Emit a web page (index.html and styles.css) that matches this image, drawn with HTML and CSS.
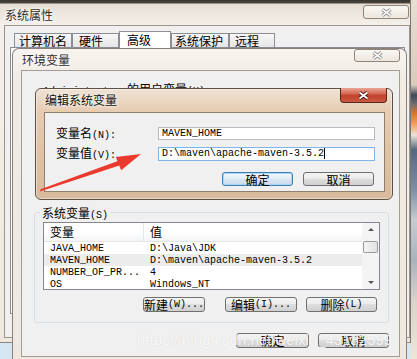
FILE: index.html
```html
<!DOCTYPE html>
<html>
<head>
<meta charset="utf-8">
<link rel="stylesheet" href="styles.css">
</head>
<body>
<div class="desk ui">
  <div class="outer">
    <div class="outer-tbar"><span class="ttl">系统属性</span></div>
    <div class="capx capx-in outer-x">
      <svg width="13" height="9" viewBox="0 0 13 9"><path d="M2.5 1.5 L10.5 7.5 M10.5 1.5 L2.5 7.5" stroke="#7a7a7a" stroke-width="3.4" fill="none"/><path d="M2.5 1.5 L10.5 7.5 M10.5 1.5 L2.5 7.5" stroke="#fbfbfb" stroke-width="1.6" fill="none"/></svg>
    </div>
    <div class="outer-client">
      <div class="tabs">
        <div class="tab t1">计算机名</div>
        <div class="tab t2">硬件</div>
        <div class="tab t3 sel">高级</div>
        <div class="tab t4">系统保护</div>
        <div class="tab t5">远程</div>
      </div>
      <div class="tabpanel"></div>
    </div>
  </div>

  <div class="env">
    <div class="env-tbar"><span class="ttl">环境变量</span></div>
    <div class="capx capx-in env-x">
      <svg width="13" height="9" viewBox="0 0 13 9"><path d="M2.5 1.5 L10.5 7.5 M10.5 1.5 L2.5 7.5" stroke="#7a7a7a" stroke-width="3.4" fill="none"/><path d="M2.5 1.5 L10.5 7.5 M10.5 1.5 L2.5 7.5" stroke="#fbfbfb" stroke-width="1.6" fill="none"/></svg>
    </div>
    <div class="env-client">
      <div class="user-sec"><span class="m">Administrator </span>的用户变量<span class="m">(U)</span></div>
      <div class="sys-group">
        <div class="glabel">系统变量<span class="m">(S)</span></div>
        <div class="lv">
          <div class="lv-main">
            <div class="lv-head">
              <div class="h1">变量</div>
              <div class="h2">值</div>
            </div>
            <div class="lv-row m"><div class="c1">JAVA_HOME</div><div class="c2">D:\Java\JDK</div></div>
            <div class="lv-row m sel-row"><div class="c1">MAVEN_HOME</div><div class="c2">D:\maven\apache-maven-3.5.2</div></div>
            <div class="lv-row m"><div class="c1">NUMBER_OF_PR...</div><div class="c2">4</div></div>
            <div class="lv-row m"><div class="c1">OS</div><div class="c2">Windows_NT</div></div>
          </div>
          <div class="sb">
            <div class="arr-up"></div>
            <div class="thumb"></div>
            <div class="arr-down"></div>
          </div>
        </div>
        <div class="gbtns">
          <div class="btn b-new">新建<span class="m">(W)...</span></div>
          <div class="btn b-edit">编辑<span class="m">(I)...</span></div>
          <div class="btn b-del">删除<span class="m">(L)</span></div>
        </div>
      </div>
      <div class="bbtns">
        <div class="btn b-ok">确定</div>
        <div class="btn b-cancel">取消</div>
      </div>
    </div>
  </div>

  <div class="edit">
    <div class="edit-tbar"><span class="ttl dark">编辑系统变量</span></div>
    <div class="capx edit-x">
      <svg width="13" height="9" viewBox="0 0 13 9"><path d="M2.5 1.5 L10.5 7.5 M10.5 1.5 L2.5 7.5" stroke="#4a1c14" stroke-width="3.6" fill="none"/><path d="M2.5 1.5 L10.5 7.5 M10.5 1.5 L2.5 7.5" stroke="#ffffff" stroke-width="1.8" fill="none"/></svg>
    </div>
    <div class="edit-client">
      <div class="erow">
        <div class="elabel">变量名<span class="m">(N):</span></div>
        <div class="einput m">MAVEN_HOME</div>
      </div>
      <div class="erow erow2">
        <div class="elabel">变量值<span class="m">(V):</span></div>
        <div class="einput focus m">D:\maven\apache-maven-3.5.2<span class="caret"></span></div>
      </div>
      <div class="ebtns">
        <div class="btn def b-eok">确定</div>
        <div class="btn b-ecancel">取消</div>
      </div>
    </div>
  </div>

  <svg class="arrow" width="417" height="359" viewBox="0 0 417 359">
    <polygon points="40,191.5 40.6,189.3 120,160.2 121.6,164.8" fill="#ea3a2e"/>
    <polygon points="141,154 115.8,157 121.2,170.2" fill="#ea3a2e"/>
  </svg>

  <div class="wm">https://blog.csdn.net/weixin_43182599</div>
</div>
</body>
</html>
```

FILE: styles.css
```css
* { box-sizing: border-box; margin: 0; padding: 0; }
html, body { width: 417px; height: 359px; overflow: hidden; }
body { background: #d7e6f4; }

.ui {
  font-family: "Noto Sans CJK SC", "Liberation Sans", sans-serif;
  font-size: 12px;
  line-height: 14px;
  color: #000;
}
.m { font-family: "Liberation Mono", monospace; font-size: 10px; }

.desk {
  position: relative;
  width: 417px;
  height: 359px;
  overflow: hidden;
  background:
    linear-gradient(to bottom, #e8ded2 0, #d8cbbc 85px, #3f4a58 95px, #6b6e73 104px, #d9742a 113px, #f0a050 124px, #e9e2d8 135px, #55687d 150px, #7d8fa3 190px, #c6ccd2 220px, #aab3bc 260px, #d8d2ca 300px, #efe6da 359px) right top / 7px 100% no-repeat,
    #d7e6f4;
}

/* ---------- outer window ---------- */
.outer {
  position: absolute;
  left: 0;
  top: 0;
  width: 411px;
  height: 343px;
  background: linear-gradient(#3b3530 0, #4a443e 3px, #e6ded4 4px, #f4efe9 24px, #efe8df 100%);
  border-right: 1px solid #7d766e;
  border-bottom: 1px solid #8d867e;
}
.outer-tbar { height: 25px; padding: 8px 0 0 5px; }
.ttl { color: #2e2e2e; text-shadow: 0 0 5px #fff, 0 0 3px #fff; }
.ttl.dark { color: #111; }

.capx {
  position: absolute;
  display: flex;
  align-items: center;
  justify-content: center;
}
.capx-in {
  border: 1px solid #8f857a;
  border-radius: 3px;
  background: linear-gradient(#faf7f3, #ede6de);
}
.outer-x { left: 363px; top: 5px; width: 46px; height: 14px; }

.outer-client {
  margin-left: 4px;
  width: 406px;
  height: 313px;
  border: 1px solid #9b958e;
  background: #f0f0f0;
}
.tabs {
  display: flex;
  align-items: flex-end;
  height: 21px;
  padding-left: 9px;
}
.tab {
  height: 14px;
  border: 1px solid #8c8e94;
  border-bottom: none;
  background: linear-gradient(#f7f7f7, #e5e5e5);
  line-height: 13px;
}
.tab.sel {
  height: 17px;
  margin-bottom: -1px;
  background: #fff;
  line-height: 15px;
  position: relative;
  z-index: 1;
}
.t1 { width: 58px; padding-left: 4px; }
.t2 { width: 47px; padding-left: 6px; }
.t3 { width: 52px; padding-left: 7px; }
.t4 { width: 58px; padding-left: 3px; }
.t5 { width: 46px; padding-left: 5px; }
.tabpanel {
  margin-left: 5px;
  width: 395px;
  height: 267px;
  border: 1px solid #898c95;
  background: #fdfdfd;
}

/* ---------- environment dialog ---------- */
.env {
  position: absolute;
  left: 12px;
  top: 48px;
  width: 395px;
  height: 311px;
  border: 1px solid #8a827a;
  border-bottom: none;
  border-radius: 7px 7px 0 0;
  background: linear-gradient(#f8f4ef, #f1ebe4 30px, #efe8e0);
  padding: 0 6px 0 8px;
}
.env-tbar { height: 21px; padding: 4px 0 0 1px; }
.env-x { left: 341px; top: 0; width: 46px; height: 13px; }

.env-client {
  height: 287px;
  border: 1px solid #a29c95;
  background: #f0f0f0;
}
.user-sec {
  height: 141px;
  padding: 11px 0 0 21px;
  line-height: 13px;
}
.sys-group {
  margin: 0 10px 0 12px;
  border: 1px solid #d5dfe5;
  border-radius: 3px;
  padding: 0 8px 10px 8px;
}
.glabel {
  width: max-content;
  height: 13px;
  line-height: 13px;
  margin: -7px 0 0 -3px;
  padding: 0 2px;
  background: #f0f0f0;
}
.lv {
  display: flex;
  margin-top: 3px;
  height: 68px;
  border: 1px solid #828790;
  background: #fff;
  overflow: hidden;
}
.lv-main { flex: 1; min-width: 0; }
.lv-head {
  display: flex;
  height: 19px;
  line-height: 18px;
  border-bottom: 1px solid #e5e5e5;
  background: linear-gradient(#fff, #fff 50%, #f3f4f6);
}
.h1 { width: 100px; padding-left: 6px; border-right: 1px solid #e3e6ea; }
.h2 { padding-left: 6px; }
.lv-row { display: flex; height: 12px; line-height: 13px; white-space: nowrap; }
.sel-row { background: #ececec; }
.c1 { width: 100px; padding-left: 6px; }
.c2 { padding-left: 6px; }

.sb {
  width: 17px;
  display: flex;
  flex-direction: column;
  align-items: center;
  background: #f4f4f4;
}
.arr-up {
  margin-top: 5px;
  width: 0;
  height: 0;
  border-left: 3px solid transparent;
  border-right: 3px solid transparent;
  border-bottom: 3px solid #555;
}
.thumb {
  margin-top: 10px;
  width: 15px;
  height: 12px;
  border: 1px solid #9b9b9b;
  border-radius: 2px;
  background: linear-gradient(90deg, #f4f4f4, #e2e2e2);
}
.arr-down {
  margin-top: auto;
  margin-bottom: 5px;
  width: 0;
  height: 0;
  border-left: 3px solid transparent;
  border-right: 3px solid transparent;
  border-top: 3px solid #555;
}

.btn {
  height: 15px;
  border: 1px solid #707070;
  border-radius: 3px;
  background: linear-gradient(#f4f4f4, #ececec 45%, #dedede 50%, #d0d0d0);
  display: flex;
  align-items: center;
  justify-content: center;
  line-height: 13px;
  white-space: nowrap;
}
.btn.def {
  border-color: #3c7fb1;
  background: linear-gradient(#f1f7fb, #e6eff6 45%, #d8e6f1 50%, #cbdcea);
  box-shadow: inset 0 0 0 1px #a9d6f3;
}
.gbtns { display: flex; margin-top: 7px; padding-left: 100px; }
.b-new { width: 62px; }
.b-edit { width: 72px; margin-left: 20px; }
.b-del { width: 71px; margin-left: 9px; }

.bbtns {
  display: flex;
  justify-content: flex-end;
  gap: 9px;
  margin: 10px 10px 0 0;
}
.b-ok { width: 73px; }
.b-cancel { width: 71px; }

/* ---------- edit dialog ---------- */
.edit {
  position: absolute;
  left: 35px;
  top: 88px;
  width: 358px;
  height: 112px;
  border: 1px solid #5e5043;
  border-radius: 6px;
  background: linear-gradient(#efe2d4, #e6ccb2 22px, #dfc2a5 60%, #d8b99b);
  box-shadow: inset 0 0 0 1px rgba(255, 255, 255, 0.45);
  padding: 0 7px 7px 8px;
}
.edit-tbar { height: 23px; padding: 4px 0 0 1px; }
.edit-x {
  right: 5px;
  top: -1px;
  width: 47px;
  height: 15px;
  border: 1px solid #5a261c;
  border-top: none;
  border-radius: 0 0 4px 4px;
  background: linear-gradient(#eaa596, #d46a55 40%, #c1402b 55%, #cc5b43);
}
.edit-client {
  height: 80px;
  border: 1px solid #8f7e6d;
  background: #f0f0f0;
  padding-top: 14px;
}
.erow {
  display: flex;
  align-items: center;
  height: 13px;
  padding-left: 11px;
}
.erow2 { margin-top: 7px; height: 14px; }
.elabel { width: 102px; line-height: 13px; }
.einput {
  width: 217px;
  height: 100%;
  border: 1px solid #b9bcc2;
  background: #fff;
  padding-left: 3px;
  line-height: 11px;
  white-space: nowrap;
}
.einput.focus { border-color: #7eb4ea; }
.caret {
  display: inline-block;
  width: 1px;
  height: 11px;
  background: #000;
  vertical-align: top;
}
.ebtns {
  display: flex;
  justify-content: flex-end;
  gap: 10px;
  margin-top: 11px;
  padding-right: 10px;
}
.ebtns .btn { width: 71px; height: 14px; }

/* ---------- overlays ---------- */
.arrow { position: absolute; left: 0; top: 0; pointer-events: none; }
.wm {
  position: absolute;
  left: 137px;
  top: 331px;
  font-family: "Liberation Sans", Arial, sans-serif;
  font-size: 15px;
  line-height: 17px;
  color: rgba(255, 255, 255, 0.85);
  text-shadow: 0 0 1px rgba(120, 120, 120, 0.25);
  white-space: nowrap;
  pointer-events: none;
}
```
